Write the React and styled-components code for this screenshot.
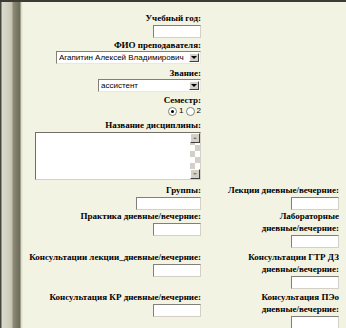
import React from "react";
import styled, { createGlobalStyle } from "styled-components";

const Global = createGlobalStyle`
  html, body {
    margin: 0;
    padding: 0;
    background: #f3f3e3;
  }
`;

const Page = styled.div`
  display: flex;
  width: 346px;
  height: 328px;
  overflow: hidden;
  border-top: 2px solid #3c3c34;
  box-sizing: border-box;
  background: #f3f3e3;
`;

const Sidebar = styled.div`
  width: 23px;
  flex: none;
  background: linear-gradient(
    to right,
    #46463e 0px,
    #46463e 1px,
    #dcdbcc 2px,
    #d2d1c0 8px,
    #c4c3b0 12px,
    #8e8c78 13px,
    #7a7866 17px,
    #6c6a58 20px,
    #d8d7c4 21px,
    #f3f3e3 23px
  );
`;

const Main = styled.div`
  flex: 1;
  padding: 10px 0 0 10px;
`;

const Label = styled.div`
  font-family: "Liberation Serif", "Times New Roman", "DejaVu Serif", serif;
  font-size: 9px;
  font-weight: bold;
  line-height: 12px;
  color: #000;
  text-align: right;
  white-space: nowrap;
`;

const Stack = styled.div`
  width: 168px;
  display: flex;
  flex-direction: column;
  align-items: flex-end;
`;

const Field = styled.div`
  display: flex;
  flex-direction: column;
  align-items: flex-end;
  gap: ${(p) => p.$gap ?? 1}px;
  margin-bottom: ${(p) => p.$mb ?? 0}px;
`;

const Input = styled.div`
  width: ${(p) => p.$w}px;
  height: 11px;
  background: #fff;
  border-top: 1px solid #808078;
  border-left: 1px solid #808078;
  border-right: 1px solid #d4d0c8;
  border-bottom: 1px solid #d4d0c8;
`;

const Select = styled.div`
  width: ${(p) => p.$w}px;
  height: 11px;
  display: flex;
  align-items: center;
  background: #fff;
  border-top: 1px solid #808078;
  border-left: 1px solid #808078;
  border-right: 1px solid #e8e8e0;
  border-bottom: 1px solid #e8e8e0;
`;

const SelectText = styled.div`
  flex: 1;
  overflow: hidden;
  white-space: nowrap;
  font-family: "Liberation Sans", Arial, sans-serif;
  font-size: 8px;
  line-height: 10px;
  padding-left: 2px;
  color: #000;
`;

const DropBtn = styled.div`
  width: 10px;
  height: 9px;
  margin-right: 1px;
  background: #d4d0c8;
  border-top: 1px solid #fff;
  border-left: 1px solid #fff;
  border-right: 1px solid #404040;
  border-bottom: 1px solid #404040;
  box-sizing: border-box;
  display: flex;
  align-items: center;
  justify-content: center;
  &::after {
    content: "";
    border-left: 3px solid transparent;
    border-right: 3px solid transparent;
    border-top: 3px solid #000;
  }
`;

const Radios = styled.div`
  display: flex;
  align-items: center;
  gap: 2px;
  font-family: "Liberation Sans", Arial, sans-serif;
  font-size: 8px;
  line-height: 10px;
  height: 10px;
`;

const Radio = styled.span`
  width: 7px;
  height: 7px;
  border-radius: 50%;
  background: #fff;
  border: 1px solid #808078;
  display: inline-flex;
  align-items: center;
  justify-content: center;
  &::after {
    content: "";
    width: 3px;
    height: 3px;
    border-radius: 50%;
    background: ${(p) => (p.$on ? "#000" : "transparent")};
  }
`;

const TextArea = styled.div`
  width: 164px;
  height: 46px;
  display: flex;
  background: #fff;
  border-top: 1px solid #707068;
  border-left: 1px solid #707068;
  border-right: 1px solid #d4d0c8;
  border-bottom: 1px solid #d4d0c8;
  justify-content: flex-end;
`;

const Scrollbar = styled.div`
  width: 10px;
  display: flex;
  flex-direction: column;
  justify-content: space-between;
  background-color: #fff;
  background-image: conic-gradient(
    #d4d0c8 0 25%,
    #fff 0 50%,
    #d4d0c8 0 75%,
    #fff 0
  );
  background-size: 10px 12px;
`;

const ScrollBtn = styled.div`
  width: 10px;
  height: 10px;
  background: #d4d0c8;
  border-top: 1px solid #fff;
  border-left: 1px solid #fff;
  border-right: 1px solid #404040;
  border-bottom: 1px solid #404040;
  box-sizing: border-box;
  display: flex;
  align-items: center;
  justify-content: center;
  &::after {
    content: "";
    border-left: 2px solid transparent;
    border-right: 2px solid transparent;
    ${(p) => (p.$up ? "border-bottom: 2px solid #808078;" : "border-top: 2px solid #808078;")}
  }
`;

const Grid = styled.div`
  display: grid;
  grid-template-columns: 168px 110px;
  column-gap: 28px;
  margin-top: 4px;
`;

export default function App() {
  return (
    <>
      <Global />
      <Page>
        <Sidebar />
        <Main>
          <Stack>
            <Field $mb={1}>
              <Label>Учебный год:</Label>
              <Input $w={46} />
            </Field>
            <Field $gap={0} $mb={3}>
              <Label>ФИО преподавателя:</Label>
              <Select $w={143}>
                <SelectText>Агапитин Алексей Владимирович</SelectText>
                <DropBtn />
              </Select>
            </Field>
            <Field $gap={0} $mb={2}>
              <Label>Звание:</Label>
              <Select $w={101}>
                <SelectText>ассистент</SelectText>
                <DropBtn />
              </Select>
            </Field>
            <Field $gap={-1} $mb={3}>
              <Label>Семестр:</Label>
              <Radios>
                <Radio $on />
                <span>1</span>
                <Radio />
                <span>2</span>
              </Radios>
            </Field>
            <Field $gap={1}>
              <Label>Название дисциплины:</Label>
              <TextArea>
                <Scrollbar>
                  <ScrollBtn $up />
                  <ScrollBtn />
                </Scrollbar>
              </TextArea>
            </Field>
          </Stack>
          <Grid>
            <Field>
              <Label>Группы:</Label>
              <Input $w={63} />
            </Field>
            <Field>
              <Label>Лекции дневные/вечерние:</Label>
              <Input $w={46} />
            </Field>
            <Field $mb={3}>
              <Label>Практика дневные/вечерние:</Label>
              <Input $w={46} />
            </Field>
            <Field $mb={3}>
              <Label>
                Лабораторные
                <br />
                дневные/вечерние:
              </Label>
              <Input $w={46} />
            </Field>
            <Field $mb={2}>
              <Label>Консультации лекции_дневные/вечерние:</Label>
              <Input $w={46} />
            </Field>
            <Field $mb={2}>
              <Label>
                Консультации ГТР ДЗ
                <br />
                дневные/вечерние:
              </Label>
              <Input $w={46} />
            </Field>
            <Field>
              <Label>Консультация КР дневные/вечерние:</Label>
              <Input $w={46} />
            </Field>
            <Field>
              <Label>
                Консультация ПЭо
                <br />
                дневные/вечерние:
              </Label>
              <Input $w={46} />
            </Field>
          </Grid>
        </Main>
      </Page>
    </>
  );
}
